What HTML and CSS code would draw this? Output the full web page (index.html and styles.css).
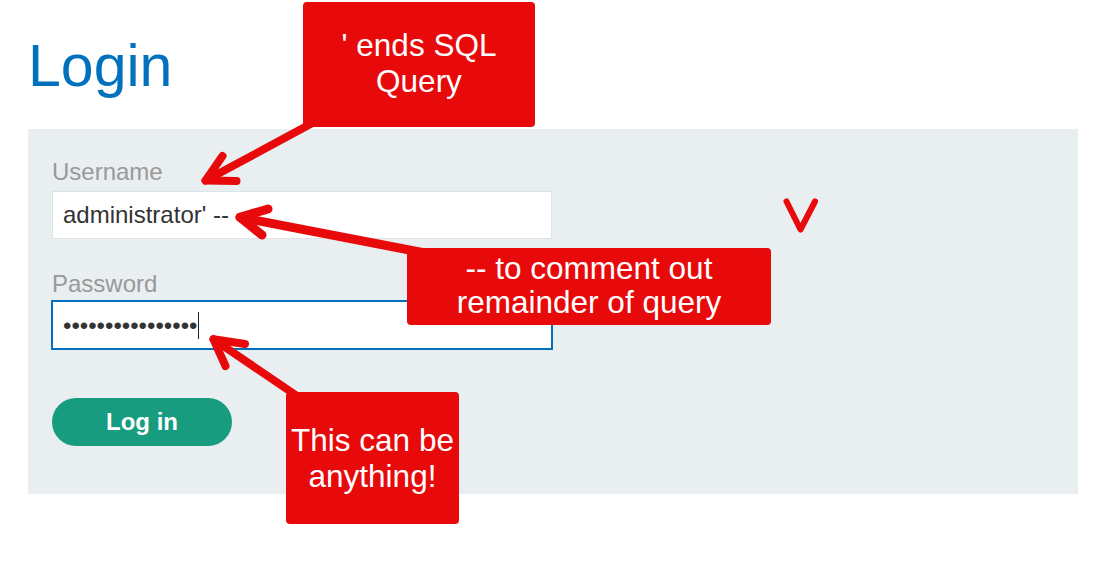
FILE: index.html
```html
<!DOCTYPE html>
<html lang="en">
<head>
<meta charset="utf-8">
<title>Login</title>
<link rel="stylesheet" href="styles.css">
</head>
<body>
<div class="page">
  <h1 class="title">Login</h1>
  <form class="panel">
    <label class="label" for="username">Username</label>
    <input class="field" id="username" type="text" value="administrator' --">
    <label class="label label-password">Password</label>
    <div class="field field-focus"><span class="dots">••••••••••••••••</span><span class="caret"></span></div>
    <button class="btn" type="button">Log in</button>
  </form>

  <svg class="arrows" width="1114" height="578" viewBox="0 0 1114 578" aria-hidden="true">
    <g class="arrow">
      <path d="M318 120 L205.6 180.6"/>
      <path d="M222.5 156 L205.6 180.6 L236.5 181"/>
    </g>
    <g class="arrow arrow-wide">
      <path d="M430 254 L240 217.3"/>
      <path d="M268 209 L240 217.3 L262 235"/>
    </g>
    <g class="arrow">
      <path d="M300 398 L213.5 339.3"/>
      <path d="M245 344 L213.5 339.3 L225.5 366"/>
    </g>
    <path class="tick" d="M786.5 201.5 L800.5 229.5 L815 201.5"/>
  </svg>

  <div class="callout callout-sql">' ends SQL<br>Query</div>
  <div class="callout callout-comment">-- to comment out<br>remainder of query</div>
  <div class="callout callout-any">This can be<br>anything!</div>
</div>
</body>
</html>
```

FILE: styles.css
```css
html, body {
  margin: 0;
  padding: 0;
  background: #ffffff;
}

body {
  font-family: "Liberation Sans", Arial, sans-serif;
  width: 1114px;
  height: 578px;
  overflow: hidden;
}

.page {
  position: relative;
  width: 1050px;
  padding: 33px 0 0 28px;
}

.title {
  margin: 0 0 30px;
  font-size: 59px;
  line-height: 66px;
  font-weight: normal;
  color: #0071bc;
}

.panel {
  display: flex;
  flex-direction: column;
  align-items: flex-start;
  width: 1050px;
  box-sizing: border-box;
  padding: 29px 24px 48px;
  background: #e9eef1;
}

.label {
  font-size: 24px;
  line-height: 27px;
  color: #999999;
  margin-bottom: 6px;
}

.label-password {
  margin-top: 31px;
  margin-bottom: 4px;
}

.field {
  box-sizing: border-box;
  width: 500px;
  height: 48px;
  margin: 0;
  padding: 0 10px;
  border: 1px solid #dde2e5;
  background: #ffffff;
  font-family: "Liberation Sans", Arial, sans-serif;
  font-size: 24px;
  color: #333333;
  outline: none;
}

.field-focus {
  display: flex;
  align-items: center;
  border-color: #0071bc;
  box-shadow: 0 0 0 1px #0071bc;
}

.dots {
  line-height: 27px;
  color: #333333;
}

.caret {
  width: 1px;
  height: 27px;
  margin-left: 1px;
  background: #222222;
}

.btn {
  margin-top: 49px;
  width: 180px;
  height: 48px;
  border: none;
  border-radius: 24px;
  background: #179c7f;
  color: #ffffff;
  font-family: "Liberation Sans", Arial, sans-serif;
  font-size: 24px;
  font-weight: bold;
  padding: 0;
}

.arrows {
  position: absolute;
  left: 0;
  top: 0;
  pointer-events: none;
}

.arrow path {
  fill: none;
  stroke: #e8090a;
  stroke-width: 8;
  stroke-linecap: round;
  stroke-linejoin: round;
}

.arrow-wide path {
  stroke-width: 9;
}

.tick {
  fill: none;
  stroke: #e8090a;
  stroke-width: 6;
  stroke-linecap: round;
  stroke-linejoin: round;
}

.callout {
  position: absolute;
  box-sizing: border-box;
  display: flex;
  justify-content: center;
  background: #e8090a;
  border-radius: 4px;
  color: #ffffff;
  font-size: 31.5px;
  text-align: center;
  white-space: nowrap;
}

.callout-sql {
  left: 303px;
  top: 2px;
  width: 232px;
  height: 125px;
  padding-top: 25px;
  line-height: 36px;
}

.callout-comment {
  left: 407px;
  top: 248px;
  width: 364px;
  height: 77px;
  padding-top: 3px;
  line-height: 34px;
}

.callout-any {
  left: 286px;
  top: 392px;
  width: 173px;
  height: 132px;
  align-items: center;
  line-height: 36px;
}
```
